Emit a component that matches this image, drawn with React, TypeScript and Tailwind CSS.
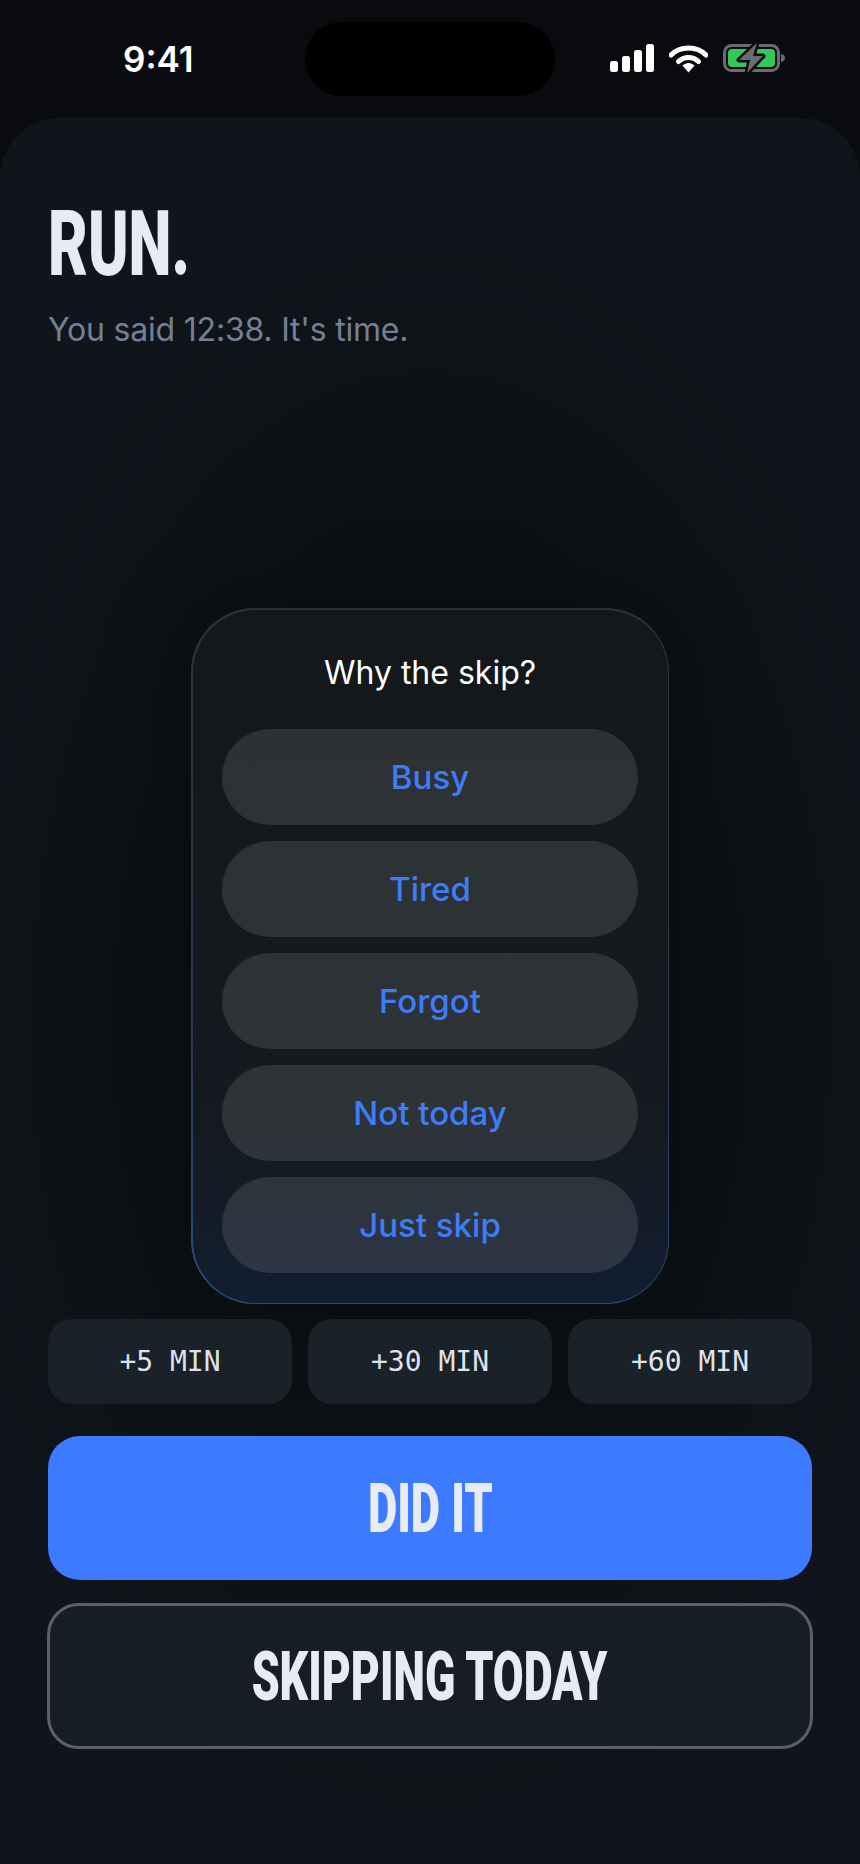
import React from 'react';

const REASONS = ['Busy', 'Tired', 'Forgot', 'Not today', 'Just skip'];
const SNOOZE = ['+5 MIN', '+30 MIN', '+60 MIN'];

const StatusIcons = () => (
  <div className="flex items-center">
    <svg width="44" height="28" viewBox="0 0 44 28" className="mr-[15px]">
      <rect x="0" y="17" width="8" height="11" rx="2.5" fill="#fff" />
      <rect x="12" y="12" width="8" height="16" rx="2.5" fill="#fff" />
      <rect x="24" y="6" width="8" height="22" rx="2.5" fill="#fff" />
      <rect x="36" y="0" width="8" height="28" rx="2.5" fill="#fff" />
    </svg>
    <svg width="39" height="29" viewBox="0 0 39 29" className="mr-[15px]" fill="none">
      <path d="M2 11 C11 1.500 28 1.500 37 11" stroke="#fff" strokeWidth="5" strokeLinecap="round" />
      <path d="M9.500 17.500 C15 12 24 12 29.500 17.500" stroke="#fff" strokeWidth="5" strokeLinecap="round" />
      <path d="M13.500 21.500 C17 18 22 18 25.500 21.500 L19.500 28.500 Z" fill="#fff" />
    </svg>
    <svg width="62" height="30" viewBox="0 0 62 30" fill="none">
      <rect x="1.500" y="2.500" width="54" height="25" rx="7" stroke="#6a6d70" strokeWidth="3" />
      <rect x="5" y="6" width="47" height="18" rx="4" fill="#34c759" />
      <path d="M58 11 C60.500 11.500 62 13 62 15 C62 17 60.500 18.500 58 19 Z" fill="#6a6d70" />
      <path d="M34 0 L16 17 H27 L24 30 L40 13 H30 Z" fill="#6a6d70" stroke="#0a0b0f" strokeWidth="5" strokeLinejoin="round" paintOrder="stroke" />
    </svg>
  </div>
);

export default function App() {
  return (
    <div className="w-[860px] h-[1864px] flex flex-col overflow-hidden bg-[#0a0b0f] font-['Inter',sans-serif]">
      <div className="h-[118px] shrink-0 grid grid-cols-[1fr_250px_1fr] items-start pt-[22px]">
        <div className="h-[74px] pl-[123px] flex items-center text-[35px] font-semibold text-white leading-none">9:41</div>
        <div className="h-[74px] bg-black rounded-[37px]" />
        <div className="h-[74px] pr-[75px] flex items-center justify-end -mt-[1px]">
          <StatusIcons />
        </div>
      </div>

      <div className="flex-1 flex flex-col rounded-t-[60px] px-[48px] bg-[#10151b] bg-[radial-gradient(ellipse_62%_50%_at_50%_52%,#0a0e11_0%,#0c1114_55%,#10151c_100%)]">
        <div className="pt-[93px] h-[490px] shrink-0">
          <div className="h-[68px] flex items-center text-[#e8ebf1]">
            <span className="inline-block origin-left scale-x-[0.68] font-['Roboto',sans-serif] font-black text-[90px] leading-none whitespace-nowrap">RUN.</span>
          </div>
          <p className="mt-[33px] text-[32px] tracking-[-0.2px] leading-[36px] text-[#748095]">You said 12:38. It's time.</p>
        </div>

        <div className="self-center w-[478px] h-[696px] shrink-0 rounded-[64px] p-[1.5px] bg-[linear-gradient(180deg,#2b333a_0%,#2b3a50_65%,#2c4d87_100%)] shadow-[0_0_90px_rgba(0,0,0,0.3)]">
          <div className="h-full rounded-[62.5px] bg-[linear-gradient(180deg,#14181b_0%,#141a20_75%,#121e31_100%)] px-[29.5px] pt-[43.5px] flex flex-col">
            <div className="h-[40px] flex items-center justify-center text-[32px] text-white leading-none">Why the skip?</div>
            <div className="mt-[36px] flex flex-col gap-[16px]">
              {REASONS.map((r) => (
                <div key={r} className="h-[96px] rounded-[48px] bg-white/11 flex items-center justify-center pt-[1px] text-[33px] font-[450] text-[#3f7cf7] leading-none">
                  {r}
                </div>
              ))}
            </div>
          </div>
        </div>

        <div className="mt-[15px] flex gap-[16px]">
          {SNOOZE.map((s) => (
            <div key={s} className="flex-1 h-[85px] rounded-[24px] bg-[#1a2129] flex items-center justify-center font-['DejaVu_Sans_Mono',monospace] text-[28px] text-[#dfe3e9] leading-none">
              {s}
            </div>
          ))}
        </div>

        <div className="mt-[32px] h-[144px] rounded-[32px] bg-[#3c7bff] flex items-center justify-center text-[#e8ebf1]">
          <span className="inline-block scale-x-[0.655] font-['Roboto',sans-serif] font-black text-[69px] leading-none whitespace-nowrap">DID IT</span>
        </div>

        <div className="mt-[23px] -mx-[1px] h-[146px] rounded-[32px] border-[3px] border-[#5b6069] bg-[#161d27] flex items-center justify-center text-[#e8ebf1]">
          <span className="inline-block scale-x-[0.648] font-['Roboto',sans-serif] font-black text-[69px] leading-none whitespace-nowrap">SKIPPING TODAY</span>
        </div>
      </div>
    </div>
  );
}
